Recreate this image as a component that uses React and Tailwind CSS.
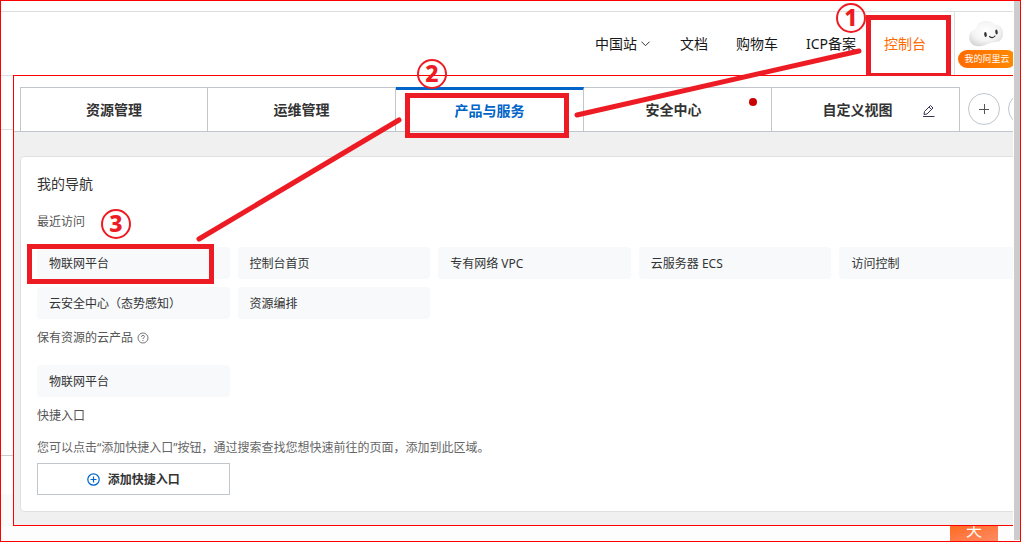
import React from 'react'

const recent = ['物联网平台', '控制台首页', '专有网络 VPC', '云服务器 ECS', '访问控制', '云安全中心（态势感知）', '资源编排']

function Chip({ children }) {
  return (
    <a href="#" className="flex h-8 items-center rounded-sm bg-[#f7f9fb] px-3 pt-0.5 text-xs text-[#333]">
      {children}
    </a>
  )
}

function Cloud() {
  return (
    <svg className="ml-1 shrink-0" width="36" height="28" viewBox="0 0 36 28" aria-hidden="true">
      <defs>
        <radialGradient id="cloud" cx="0.5" cy="0.4" r="0.65">
          <stop offset="0" stopColor="#fff" />
          <stop offset="0.6" stopColor="#f4f4f4" />
          <stop offset="1" stopColor="#d5d5d5" />
        </radialGradient>
      </defs>
      <path d="M8 9C9 3 13 1 18 1C23 1 26 3 27 5C31 4 35 8 35 13C35 19 32 22 27 22C23 22 20 24 17 25C12 27 6 27 3 23C0 19 0 11 8 9Z" fill="url(#cloud)" />
      <ellipse cx="17.5" cy="14.5" rx="1.3" ry="2.6" fill="#333" transform="rotate(-8 17.5 14.5)" />
      <ellipse cx="28.500" cy="12" rx="1.200" ry="2.600" fill="#333" transform="rotate(-8 28.5 12)" />
      <path d="M21.500 16.500Q24.500 19 27 16" fill="none" stroke="#333" strokeWidth="1.100" strokeLinecap="round" />
    </svg>
  )
}

function Header() {
  return (
    <header className="mt-2.5 flex h-16 shrink-0 justify-end border-t border-[#ddd] bg-white text-sm text-[#181818]">
      <nav className="flex items-center whitespace-nowrap">
        <a href="#" className="mr-[30px] flex items-center gap-1">
          中国站
          <svg width="9" height="6" viewBox="0 0 9 6" fill="none" stroke="#333" aria-hidden="true"><path d="M.5 .7L4.500 4.700L8.500 .7" /></svg>
        </a>
        <a href="#" className="mr-7">文档</a>
        <a href="#" className="mr-7">购物车</a>
        <a href="#" className="mr-7">ICP备案</a>
        <a href="#" className="mr-7 text-[#ff6a00]">控制台</a>
      </nav>
      <a href="#" className="flex w-[59px] flex-col items-center overflow-hidden border-l border-[#ddd] pt-2">
        <Cloud />
        <span className="ml-1.5 mt-0.5 flex h-[18px] w-[58px] shrink-0 items-center justify-center rounded-full bg-linear-to-r from-[#ff6a00] to-[#ff8a00] text-[9px] text-white">我的阿里云</span>
      </a>
    </header>
  )
}

function Tabs() {
  const tab = 'flex h-[45px] w-[188px] shrink-0 items-center justify-center border-r border-t border-[#c0c6cc] font-bold'
  return (
    <div className="flex border-b border-[#c0c6cc] bg-white pl-1.5 pt-[11px] -mb-px text-sm text-[#333]">
      <div role="tablist" className="-mb-px flex shrink-0 border-l border-[#c0c6cc]">
        <button role="tab" className="flex h-[45px] w-[187px] shrink-0 items-center justify-center border-r border-t border-[#c0c6cc] font-bold">资源管理</button>
        <button role="tab" className={tab}>运维管理</button>
        <button role="tab" aria-selected="true" className="flex h-[45px] w-[188px] shrink-0 items-center justify-center border-r border-t-[3px] border-r-[#c0c6cc] border-t-[#0064c8] font-bold text-[#0064c8]">产品与服务</button>
        <button role="tab" className={tab + ' relative'}>
          <span className="mr-2">安全中心</span>
          <span className="absolute right-3.5 top-2.5 size-2 rounded-full bg-[#c80000]" />
        </button>
        <button role="tab" className={tab + ' relative'}>
          <span className="-ml-4">自定义视图</span>
          <svg className="absolute right-6 top-4" width="13" height="13" viewBox="0 0 13 13" fill="none" stroke="#3d3350" aria-hidden="true">
            <path d="M1 12.500H12.500M2 10.500L2.500 7.500L8.500 1.500L11 4L5 10L2 10.500ZM7 3L9.500 5.500" />
          </svg>
        </button>
      </div>
      <div className="ml-2 flex shrink-0 items-center gap-2">
        <button aria-label="添加视图" className="flex size-8 items-center justify-center rounded-full border border-[#c0c6cc]">
          <svg width="10" height="10" viewBox="0 0 10 10" stroke="#555" aria-hidden="true"><path d="M0 5.500H10M5.500 0V10" /></svg>
        </button>
        <button aria-label="更多" className="size-8 rounded-full border border-[#c0c6cc]" />
      </div>
    </div>
  )
}

function Navigation() {
  return (
    <main className="mb-[13px] ml-1.5 mt-[25px] -mr-9 rounded border border-[#e0e0e0] bg-white px-4 pb-4 pt-[15px] text-xs text-[#555]">
      <h1 className="text-sm leading-6 text-[#333]">我的导航</h1>
      <h2 className="mb-4 mt-[17px] leading-[18px]">最近访问</h2>
      <div className="grid grid-cols-5 gap-2">
        {recent.map((name) => <Chip key={name}>{name}</Chip>)}
      </div>
      <h2 className="mb-[18px] mt-2.5 flex items-center gap-1 leading-[18px]">
        保有资源的云产品
        <svg width="12" height="12" viewBox="0 0 12 12" fill="none" stroke="#777" aria-hidden="true">
          <circle cx="6" cy="6" r="5" />
          <path d="M4.500 4.800Q4.500 3.400 6 3.400T7.500 4.700C7.500 5.700 6 5.600 6 7M6 8V9" />
        </svg>
      </h2>
      <div className="grid grid-cols-5 gap-2"><Chip>物联网平台</Chip></div>
      <h2 className="mt-2.5 leading-[18px]">快捷入口</h2>
      <p className="mb-1.5 mt-3.5 leading-[18px] text-[#666]">您可以点击“添加快捷入口”按钮，通过搜索查找您想快速前往的页面，添加到此区域。</p>
      <div className="grid grid-cols-5 gap-2">
        <button className="flex h-8 items-center justify-center gap-2 border border-[#c0c6cc] font-bold text-[#333]">
          <svg width="13" height="13" viewBox="0 0 13 13" fill="none" stroke="#0064c8" strokeWidth="1.200" aria-hidden="true"><circle cx="6.500" cy="6.500" r="5.700" /><path d="M3.500 6.500H9.500M6.500 3.500V9.500" /></svg>
          <span className="pt-0.5">添加快捷入口</span>
        </button>
      </div>
    </main>
  )
}

function Annotations() {
  return (
    <div className="pointer-events-none absolute -inset-px">
      <div className="absolute left-[866px] top-[15px] h-[61px] w-[85px] border-5 border-b-3 border-[#ed1c24]" />
      <div className="absolute left-[405px] top-[93px] h-[45px] w-[164px] border-5 border-[#ed1c24]" />
      <div className="absolute left-[27px] top-[244px] h-10 w-[187px] border-5 border-[#ed1c24]" />
      <svg className="absolute left-0 top-0" width="1021" height="542" fill="none" stroke="#ed1c24" aria-hidden="true">
        <path d="M859 51L577 115M399 120L199 239" strokeWidth="5" strokeLinecap="round" />
        <g strokeWidth="2">
          <circle cx="851" cy="18" r="14" />
          <circle cx="432" cy="74" r="14" />
          <circle cx="116" cy="224" r="14" />
        </g>
        <g fill="#ed1c24" stroke="none" textAnchor="middle" className="text-[23px] font-extrabold">
          <text x="851" y="26">1</text>
          <text x="432" y="82">2</text>
          <text x="116" y="232">3</text>
        </g>
      </svg>
    </div>
  )
}

export default function App() {
  return (
    <div className="relative flex min-h-screen overflow-hidden border border-[#f00] bg-white font-['Noto_Sans','Noto_Sans_CJK_SC',sans-serif]">
      <div className="flex min-w-0 flex-1 flex-col overflow-hidden">
        <Header />
        <div className="flex">
          <div className="flex w-3 shrink-0 flex-col">
            <div className="h-[55px] border-y border-[#e0e0e0]" />
            <div className="h-[326px] border-b border-[#ccc]" />
            <div className="mt-[38px] flex-1 bg-[#fafafa]" />
          </div>
          <div className="min-w-0 flex-1 overflow-hidden border-y border-l border-[#f00] bg-[#f0f0f0]">
            <Tabs />
            <Navigation />
          </div>
        </div>
        <div className="flex h-[15px] justify-end overflow-hidden bg-[#fdfdfd] pr-[15px]">
          <a href="#" className="flex h-[15px] w-12 justify-center overflow-hidden bg-linear-to-br from-[#ff6a1a] to-[#ff8a60] text-base text-white"><span className="-mt-2">天</span></a>
        </div>
      </div>
      <div className="ml-px mb-px w-1.5 shrink-0 bg-[#ccc]" />
      <Annotations />
    </div>
  )
}
